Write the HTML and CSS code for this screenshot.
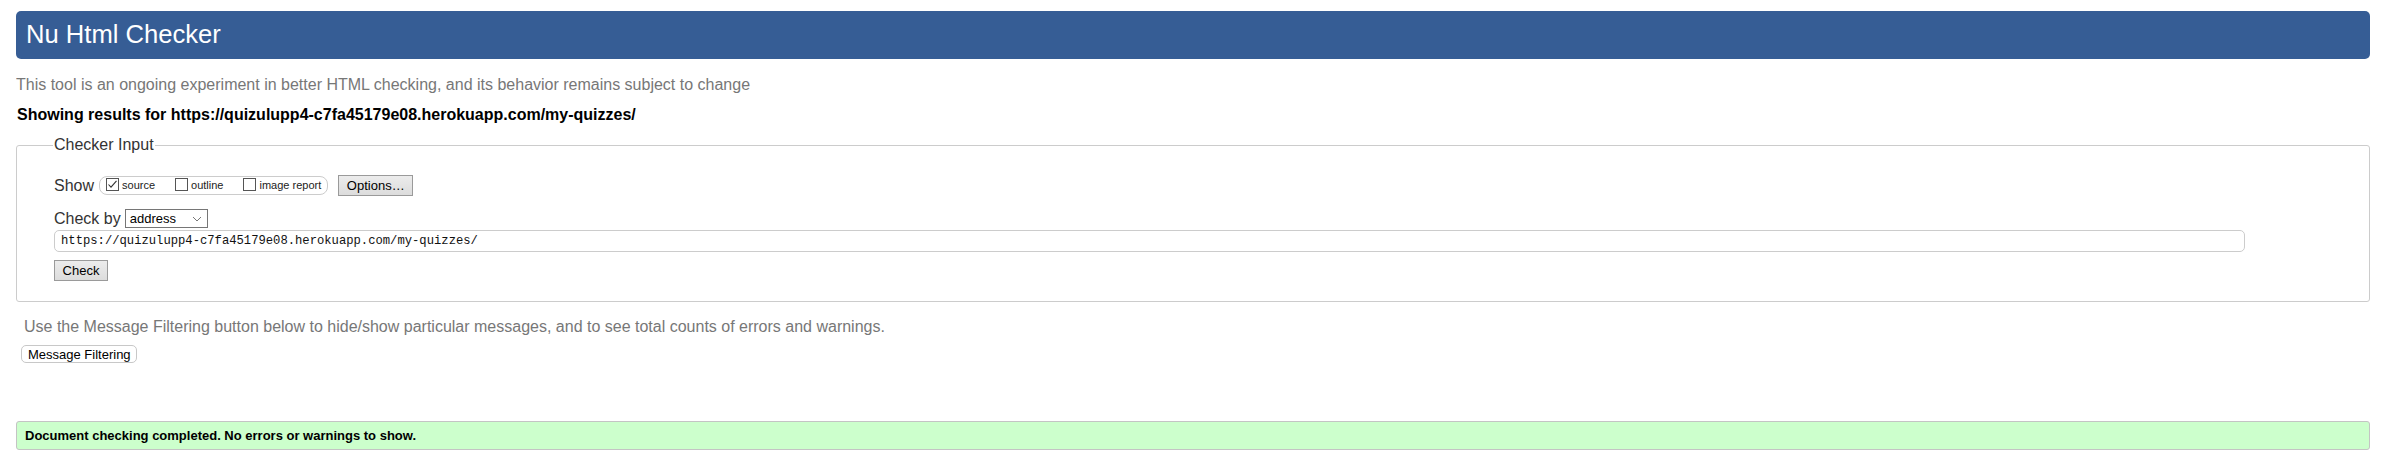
FILE: index.html
```html
<!DOCTYPE html>
<html lang="en">
<head>
<meta charset="utf-8">
<title>Showing results for https://quizulupp4-c7fa45179e08.herokuapp.com/my-quizzes/ - Nu Html Checker</title>
<link rel="stylesheet" href="styles.css">
</head>
<body>
<h1 class="title">Nu Html Checker</h1>
<p class="intro">This tool is an ongoing experiment in better HTML checking, and its behavior remains subject to change</p>
<p class="showing">Showing results for https://quizulupp4-c7fa45179e08.herokuapp.com/my-quizzes/</p>

<fieldset class="checker">
  <legend class="checker-legend">Checker Input</legend>
  <div class="row show-row">
    <span class="label">Show</span>
    <span class="show-group">
      <span class="opt">
        <span class="cb">
          <svg width="11" height="11" viewBox="0 0 11 11"><path d="M1.5 5.5 L4 8.2 L9.5 1.8" fill="none" stroke="#333" stroke-width="1.1"/></svg>
        </span>
        <span class="opt-label">source</span>
      </span>
      <span class="opt">
        <span class="cb"></span>
        <span class="opt-label">outline</span>
      </span>
      <span class="opt">
        <span class="cb"></span>
        <span class="opt-label">image report</span>
      </span>
    </span>
    <button class="btn btn-options" type="button">Options…</button>
  </div>
  <div class="row by-row">
    <span class="label">Check by</span>
    <span class="select">
      <span class="select-text">address</span>
      <svg class="chev" width="10" height="6" viewBox="0 0 10 6"><path d="M1 1 L5 5 L9 1" fill="none" stroke="#777" stroke-width="1"/></svg>
    </span>
  </div>
  <div class="url-field">https://quizulupp4-c7fa45179e08.herokuapp.com/my-quizzes/</div>
  <div class="check-row">
    <button class="btn btn-check" type="button">Check</button>
  </div>
</fieldset>

<p class="filter-note">Use the Message Filtering button below to hide/show particular messages, and to see total counts of errors and warnings.</p>
<div class="filter-row">
  <button class="btn-filter" type="button">Message Filtering</button>
</div>

<div class="success">Document checking completed. No errors or warnings to show.</div>
</body>
</html>
```

FILE: styles.css
```css
html {
  background: #fff;
}
body {
  margin: 11px 26px 0 16px;
  font-family: "Liberation Sans", Arial, sans-serif;
  font-size: 16px;
  line-height: 18px;
  color: #222;
}
.title {
  margin: 0;
  height: 48px;
  box-sizing: border-box;
  padding: 0 0 2px 10px;
  line-height: 46px;
  font-size: 25.6px;
  font-weight: normal;
  color: #fff;
  background: #365d95;
  border-radius: 5px;
}
.intro {
  margin: 17px 0 0 0;
  color: #777;
}
.showing {
  margin: 12px 0 0 1px;
  font-weight: bold;
  color: #000;
}
.checker {
  margin: 12px 0 0 0;
  padding: 21px 124px 20px 37px;
  border: 1px solid #ccc;
  border-radius: 3px;
  min-width: 0;
}
.checker-legend {
  padding: 0 1px;
  margin-left: -1px;
  color: #333;
  font-size: 16px;
  line-height: 18px;
}
.row {
  display: flex;
  align-items: center;
}
.label {
  color: #333;
  line-height: 18px;
  white-space: nowrap;
}
.show-row {
  height: 21px;
}
.show-group {
  display: flex;
  align-items: center;
  height: 19px;
  box-sizing: border-box;
  margin-left: 5px;
  padding: 0 6px 0 6px;
  border: 1px solid #ccc;
  border-radius: 8px;
  white-space: nowrap;
  flex: none;
}
.opt {
  display: flex;
  align-items: center;
  margin-right: 20px;
  flex: none;
}
.opt:last-child {
  margin-right: 0;
}
.cb {
  display: flex;
  align-items: center;
  justify-content: center;
  width: 13px;
  height: 13px;
  box-sizing: border-box;
  border: 1px solid #555;
  background: #fff;
  margin-top: -2px;
  flex: none;
}
.opt-label {
  margin-left: 3px;
  font-size: 11px;
  line-height: 13px;
  color: #222;
}
.btn {
  font-family: "Liberation Sans", Arial, sans-serif;
  font-size: 13px;
  line-height: 15px;
  color: #000;
  background: linear-gradient(#ececec, #dcdcdc);
  border: 1px solid #9a9a9a;
  border-radius: 0;
  padding: 0;
  height: 21px;
}
.btn-options {
  width: 75px;
  margin-left: 10px;
  flex: none;
}
.by-row {
  height: 19px;
  margin-top: 13px;
}
.select {
  display: flex;
  align-items: center;
  justify-content: space-between;
  width: 83px;
  height: 19px;
  box-sizing: border-box;
  margin-left: 4px;
  padding: 0 5px 0 4px;
  border: 1px solid #767676;
  background: #fff;
}
.select-text {
  font-size: 13px;
  line-height: 15px;
  color: #000;
}
.url-field {
  margin-top: 2px;
  height: 22px;
  box-sizing: border-box;
  padding: 0 6px;
  border: 1px solid #ccc;
  border-radius: 5px;
  font-family: "Liberation Mono", "Courier New", monospace;
  font-size: 12.2px;
  line-height: 20px;
  color: #111;
}
.check-row {
  margin-top: 8px;
  display: flex;
}
.btn-check {
  width: 54px;
}
.filter-note {
  margin: 16px 0 0 8px;
  color: #777;
}
.filter-row {
  margin-top: 9px;
  margin-left: 5px;
  display: flex;
}
.btn-filter {
  font-family: "Liberation Sans", Arial, sans-serif;
  font-size: 13px;
  line-height: 15px;
  color: #000;
  background: #fff;
  border: 1px solid #c8c8c8;
  border-radius: 5px;
  height: 18px;
  padding: 0 5px 0 6px;
}
.success {
  margin-top: 58px;
  height: 29px;
  box-sizing: border-box;
  padding: 0 8px;
  border: 1px solid #c4c4c4;
  border-radius: 3px;
  background: #ccffcc;
  font-size: 13px;
  font-weight: bold;
  line-height: 27px;
  color: #000;
}
```
